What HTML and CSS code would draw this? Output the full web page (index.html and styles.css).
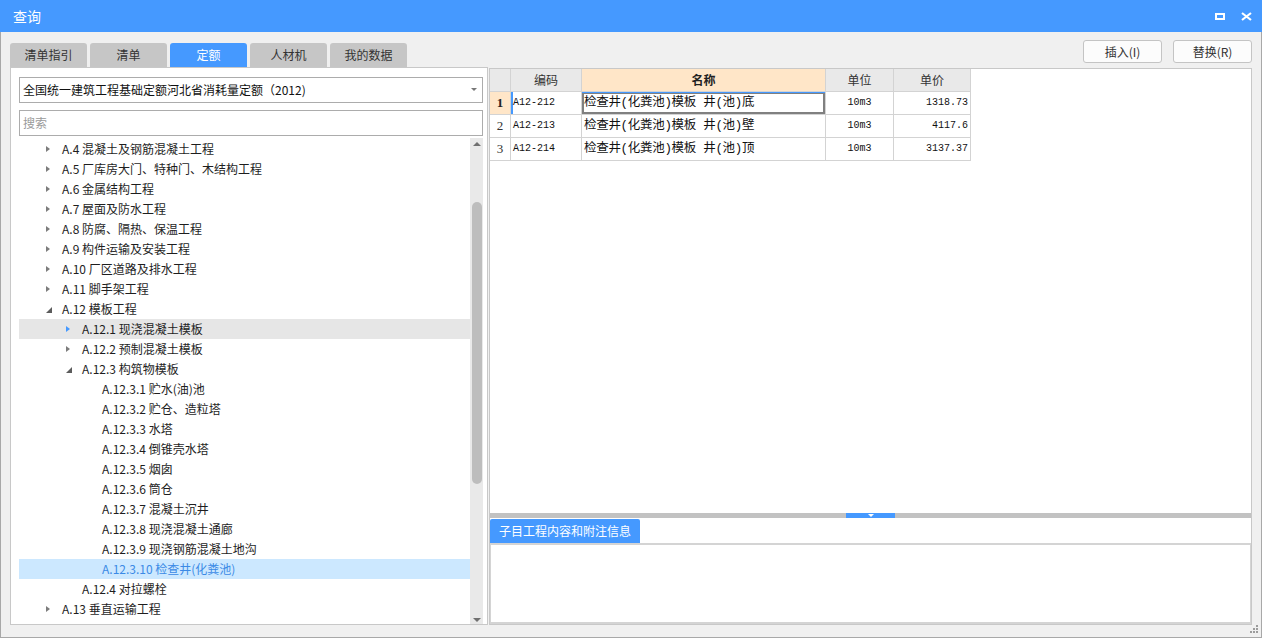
FILE: index.html
```html
<!DOCTYPE html>
<html lang="zh-CN">
<head>
<meta charset="utf-8">
<title>查询</title>
<link rel="stylesheet" href="styles.css">
</head>
<body>
<div class="window">
  <div class="titlebar">
    <span class="title">查询</span>
    <div class="tb-icons">
      <svg class="ic" width="12" height="9" viewBox="0 0 12 9"><rect x="2" y="2" width="8" height="5" fill="none" stroke="#fff" stroke-width="2"/><rect x="1" y="1" width="10" height="2" fill="#fff"/></svg>
      <svg class="ic" width="11" height="9" viewBox="0 0 11 9"><path d="M1 1 L10 8 M10 1 L1 8" stroke="#fff" stroke-width="2.2" fill="none"/></svg>
    </div>
  </div>
  <div class="content">
    <div class="toprow">
      <div class="tabs">
        <span class="tab">清单指引</span>
        <span class="tab">清单</span>
        <span class="tab active">定额</span>
        <span class="tab">人材机</span>
        <span class="tab">我的数据</span>
      </div>
      <div class="buttons">
        <span class="btn">插入(I)</span>
        <span class="btn">替换(R)</span>
      </div>
    </div>
    <div class="main">
      <div class="left">
        <div class="select">全国统一建筑工程基础定额河北省消耗量定额（2012)<span class="caret"></span></div>
        <div class="search">搜索</div>
        <div class="treewrap">
          <div class="tree">
            <div class="row l0"><span class="arr"><i class="tri-r"></i></span>A.4 混凝土及钢筋混凝土工程</div>
            <div class="row l0"><span class="arr"><i class="tri-r"></i></span>A.5 厂库房大门、特种门、木结构工程</div>
            <div class="row l0"><span class="arr"><i class="tri-r"></i></span>A.6 金属结构工程</div>
            <div class="row l0"><span class="arr"><i class="tri-r"></i></span>A.7 屋面及防水工程</div>
            <div class="row l0"><span class="arr"><i class="tri-r"></i></span>A.8 防腐、隔热、保温工程</div>
            <div class="row l0"><span class="arr"><i class="tri-r"></i></span>A.9 构件运输及安装工程</div>
            <div class="row l0"><span class="arr"><i class="tri-r"></i></span>A.10 厂区道路及排水工程</div>
            <div class="row l0"><span class="arr"><i class="tri-r"></i></span>A.11 脚手架工程</div>
            <div class="row l0"><span class="arr"><i class="tri-d"></i></span>A.12 模板工程</div>
            <div class="row l1 hover"><span class="arr"><i class="tri-r blue"></i></span>A.12.1 现浇混凝土模板</div>
            <div class="row l1"><span class="arr"><i class="tri-r"></i></span>A.12.2 预制混凝土模板</div>
            <div class="row l1"><span class="arr"><i class="tri-d"></i></span>A.12.3 构筑物模板</div>
            <div class="row l2"><span class="arr"></span>A.12.3.1 贮水(油)池</div>
            <div class="row l2"><span class="arr"></span>A.12.3.2 贮仓、造粒塔</div>
            <div class="row l2"><span class="arr"></span>A.12.3.3 水塔</div>
            <div class="row l2"><span class="arr"></span>A.12.3.4 倒锥壳水塔</div>
            <div class="row l2"><span class="arr"></span>A.12.3.5 烟囱</div>
            <div class="row l2"><span class="arr"></span>A.12.3.6 筒仓</div>
            <div class="row l2"><span class="arr"></span>A.12.3.7 混凝土沉井</div>
            <div class="row l2"><span class="arr"></span>A.12.3.8 现浇混凝土通廊</div>
            <div class="row l2"><span class="arr"></span>A.12.3.9 现浇钢筋混凝土地沟</div>
            <div class="row l2 selected"><span class="arr"></span>A.12.3.10 检查井(化粪池)</div>
            <div class="row l1"><span class="arr"></span>A.12.4 对拉螺栓</div>
            <div class="row l0"><span class="arr"><i class="tri-r"></i></span>A.13 垂直运输工程</div>
          </div>
          <div class="scrollbar">
            <span class="sb-up"></span>
            <span class="sb-thumb"></span>
            <span class="sb-down"></span>
          </div>
        </div>
      </div>
      <div class="right">
        <div class="grid">
          <div class="c hd"></div>
          <div class="c hd">编码</div>
          <div class="c hd name-hd">名称</div>
          <div class="c hd">单位</div>
          <div class="c hd">单价</div>

          <div class="c rn cur">1</div>
          <div class="c code curcode">A12-212</div>
          <div class="c name sel">检查井(化粪池)模板 井(池)底</div>
          <div class="c unit">10m3</div>
          <div class="c price">1318.73</div>

          <div class="c rn">2</div>
          <div class="c code">A12-213</div>
          <div class="c name">检查井(化粪池)模板 井(池)壁</div>
          <div class="c unit">10m3</div>
          <div class="c price">4117.6</div>

          <div class="c rn">3</div>
          <div class="c code">A12-214</div>
          <div class="c name">检查井(化粪池)模板 井(池)顶</div>
          <div class="c unit">10m3</div>
          <div class="c price">3137.37</div>
        </div>
        <div class="spacer"></div>
        <div class="splitter"><span class="split-tab"><i class="split-tri"></i></span></div>
        <div class="infotabs"><span class="infotab">子目工程内容和附注信息</span></div>
        <div class="infobox"></div>
      </div>
    </div>
  </div>
  <div class="grip">
    <i class="dot d1"></i><i class="dot d2"></i><i class="dot d3"></i>
    <i class="dot d4"></i><i class="dot d5"></i><i class="dot d6"></i>
  </div>
</div>
</body>
</html>
```

FILE: styles.css
```css
* { box-sizing: border-box; }
html, body { margin: 0; padding: 0; }
body {
  font-family: "Noto Sans CJK SC", "Liberation Sans", sans-serif;
  font-size: 12px;
  color: #222;
  background: #f0f0f0;
}
.window {
  position: relative;
  width: 1262px;
  height: 638px;
  background: #f0f0f0;
  border-left: 1px solid #a8a8a8;
  border-right: 1px solid #a8a8a8;
  border-bottom: 1px solid #a8a8a8;
  display: flex;
  flex-direction: column;
}
.titlebar {
  height: 32px;
  margin: 0 -1px;
  background: #4599ff;
  display: flex;
  align-items: center;
  justify-content: space-between;
  padding: 0 10px 0 13px;
  flex: none;
}
.title {
  color: #fff;
  font-size: 14px;
  line-height: 32px;
}
.tb-icons {
  display: flex;
  align-items: center;
  gap: 15px;
}
.ic { display: block; }

.content {
  flex: 1;
  display: flex;
  flex-direction: column;
  padding: 8px 9px 0 9px;
}
.toprow {
  height: 27px;
  display: flex;
  justify-content: space-between;
  flex: none;
}
.tabs {
  display: flex;
  gap: 3px;
  align-self: flex-end;
}
.tab {
  width: 77px;
  height: 24px;
  background: #c6c6c6;
  border-radius: 3px 3px 0 0;
  color: #333;
  font-size: 12px;
  line-height: 24px;
  text-align: center;
}
.tab.active {
  background: #4599ff;
  color: #fff;
}
.buttons {
  display: flex;
  gap: 11px;
  align-self: flex-start;
}
.btn {
  width: 79px;
  height: 23px;
  background: #fcfcfc;
  border: 1px solid #c4c4c4;
  border-radius: 3px;
  font-size: 12px;
  color: #333;
  line-height: 21px;
  text-align: center;
}

.main {
  height: 558px;
  display: flex;
  gap: 1px;
  flex: none;
}
.left {
  width: 478px;
  height: 558px;
  background: #fff;
  border: 1px solid #c8c8c8;
  padding: 9px 4px 0 8px;
  display: flex;
  flex-direction: column;
}
.select {
  position: relative;
  height: 26px;
  border: 1px solid #acacac;
  padding-left: 3px;
  font-size: 12px;
  line-height: 24px;
  color: #111;
  flex: none;
}
.caret {
  position: absolute;
  right: 5px;
  top: 10px;
  width: 0;
  height: 0;
  border-left: 3px solid transparent;
  border-right: 3px solid transparent;
  border-top: 3px solid #777;
}
.search {
  height: 26px;
  margin-top: 7px;
  border: 1px solid #acacac;
  padding-left: 3px;
  font-size: 12px;
  line-height: 24px;
  color: #9a9a9a;
  flex: none;
}
.treewrap {
  margin-top: 2px;
  flex: 1;
  display: flex;
  overflow: hidden;
}
.tree {
  width: 451px;
  padding-top: 1px;
  overflow: hidden;
}
.row {
  height: 20px;
  line-height: 20px;
  font-size: 12px;
  color: #1e1e1e;
  white-space: nowrap;
  display: flex;
  align-items: center;
}
.row.l0 { padding-left: 26px; }
.row.l1 { padding-left: 46px; }
.row.l2 { padding-left: 66px; }
.row.hover { background: #e6e6e6; }
.row.selected { background: #cce8ff; color: #3b8ae6; }
.arr {
  width: 17px;
  height: 20px;
  display: flex;
  align-items: center;
  flex: none;
}
.tri-r {
  display: block;
  margin-left: 1px;
  width: 0;
  height: 0;
  border-left: 4px solid #7c7c7c;
  border-top: 3.5px solid transparent;
  border-bottom: 3.5px solid transparent;
}
.tri-r.blue { border-left-color: #4599ff; }
.tri-d {
  display: block;
  margin-left: 1px;
  margin-top: 1px;
  width: 0;
  height: 0;
  border-bottom: 6px solid #5c5c5c;
  border-left: 6px solid transparent;
}
.scrollbar {
  width: 13px;
  background: #e9e9e9;
  display: flex;
  flex-direction: column;
  align-items: center;
}
.sb-up {
  margin-top: 4px;
  width: 0;
  height: 0;
  border-left: 4px solid transparent;
  border-right: 4px solid transparent;
  border-bottom: 4px solid #707070;
}
.sb-thumb {
  margin-top: 56px;
  width: 10px;
  height: 282px;
  background: #bdbdbd;
  border-radius: 5px;
}
.sb-down {
  margin-top: auto;
  margin-bottom: 2px;
  width: 0;
  height: 0;
  border-left: 4px solid transparent;
  border-right: 4px solid transparent;
  border-top: 4px solid #707070;
}

.right {
  width: 763px;
  height: 557px;
  margin-top: 1px;
  background: #fff;
  border: 1px solid #c8c8c8;
  display: flex;
  flex-direction: column;
}
.grid {
  display: grid;
  grid-template-columns: 21px 71px 244px 68px 77px;
  grid-auto-rows: 23px;
  flex: none;
}
.c {
  border-right: 1px solid #d3d3d3;
  border-bottom: 1px solid #d3d3d3;
  line-height: 22px;
  white-space: nowrap;
  overflow: hidden;
  color: #222;
}
.hd {
  background: #e9e9e9;
  text-align: center;
  font-size: 12px;
  color: #333;
}
.name-hd {
  background: #ffe6c8;
  font-weight: bold;
  color: #222;
}
.rn {
  text-align: center;
  font-family: "Liberation Serif", serif;
  font-size: 13px;
  color: #333;
}
.rn.cur {
  background: #ffe6c8;
  font-weight: bold;
  color: #222;
}
.code {
  font-family: "Liberation Mono", monospace;
  font-size: 10px;
  padding-left: 2px;
  color: #111;
}
.curcode {
  box-shadow: inset 2px 0 0 #4599ff;
}
.name {
  font-family: "Liberation Mono", "Noto Sans CJK SC", monospace;
  font-size: 12.5px;
  padding-left: 2px;
  letter-spacing: -0.3px;
  color: #111;
}
.name.sel {
  box-shadow: inset 0 1px 0 #4599ff, inset 2px 0 0 #808080, inset -2px 0 0 #808080, inset 0 -2px 0 #808080, inset 0 2px 0 #808080;
}
.unit {
  font-family: "Liberation Mono", monospace;
  font-size: 10px;
  text-align: center;
  color: #111;
}
.price {
  font-family: "Liberation Mono", monospace;
  font-size: 10px;
  text-align: right;
  padding-right: 2px;
  color: #111;
}
.spacer { flex: 1; }
.splitter {
  height: 5px;
  margin-bottom: 1px;
  background: #c2c2c2;
  display: flex;
  justify-content: center;
  flex: none;
}
.split-tab {
  width: 49px;
  height: 5px;
  background: #4599ff;
  display: flex;
  justify-content: center;
  align-items: center;
}
.split-tri {
  display: block;
  width: 0;
  height: 0;
  border-left: 3px solid transparent;
  border-right: 3px solid transparent;
  border-top: 3px solid #fff;
}
.infotabs {
  height: 24px;
  display: flex;
  flex: none;
}
.infotab {
  width: 150px;
  height: 24px;
  background: #4599ff;
  color: #fff;
  font-size: 12px;
  line-height: 24px;
  padding-left: 9px;
  border-radius: 2px 2px 0 0;
}
.infobox {
  height: 81px;
  border-top: 2px solid #d4d4d4;
  border-bottom: 2px solid #d4d4d4;
  border-left: 1px solid #d4d4d4;
  border-right: 1px solid #d4d4d4;
  flex: none;
}
.grip {
  position: absolute;
  right: 2px;
  bottom: 3px;
  width: 9px;
  height: 9px;
}
.dot {
  position: absolute;
  width: 2px;
  height: 2px;
  background: #9c9c9c;
}
.d1 { left: 6px; top: 0; }
.d2 { left: 3px; top: 3px; }
.d3 { left: 6px; top: 3px; }
.d4 { left: 0; top: 6px; }
.d5 { left: 3px; top: 6px; }
.d6 { left: 6px; top: 6px; }
```
